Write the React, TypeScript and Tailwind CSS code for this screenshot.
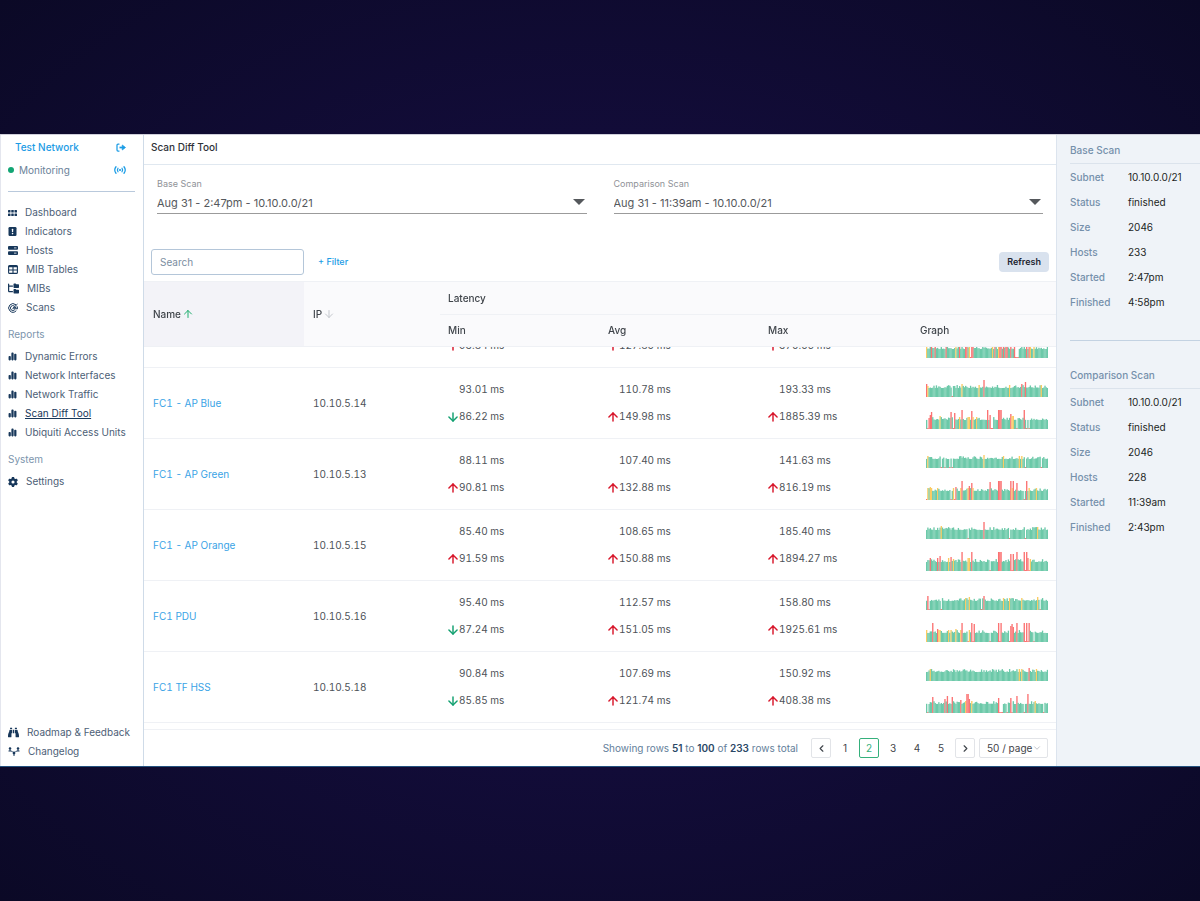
import React, { useLayoutEffect, useRef } from 'react';
import { ArrowDown, ArrowUp, ChevronDown, ChevronLeft, ChevronRight } from 'lucide-react';
import { FaBinoculars } from 'react-icons/fa';
import { FaChartSimple, FaFolderTree, FaGear } from 'react-icons/fa6';

const ROW_HEIGHT = 71;
const BAR_COUNT = 100;

const barColors: Record<string, string> = {
  g: '#6cc9a9',
  y: '#fbcb62',
  r: '#fb7272',
  x: '#fb7272',
};

type Latency = { base?: string; current: string; up: boolean };
type Host = { name?: string; ip?: string; latency: Latency[]; graphs: [string, string] };

const ms = (base: string | undefined, current: string, up = true): Latency => ({ base, current, up });

// Graph strings list the outliers only: bar index, kind (y slow, r very slow, x lost), height
const hosts: Host[] = [
  {
    latency: [ms(undefined, '93.84'), ms(undefined, '127.85'), ms(undefined, '370.56')],
    graphs: [
      '12y12 40r15 77y12',
      '0y12 4r12 7r12 16r12 24y12 27r12 32r12 33r12 35y12 36x1 37r12 38r12 54y12 56r12 59y12 60r14 61r12 63r12 65r12 66r12 69r12 72r14 73x1 74x1 75x1 82r12 84r12 85y12 88y12',
    ],
  },
  {
    name: 'FC1 - AP Blue',
    ip: '10.10.5.14',
    latency: [ms('93.01', '86.22', false), ms('110.78', '149.98'), ms('193.33', '1885.39')],
    graphs: [
      '0r13 1y11 21x1 29y13 43y12 47r17 68y12 78r13 81r15 94y12',
      '1x1 2r11 3r14 4r17 11y13 20r17 22x1 23r16 27y12 29r19 34y12 35y12 37r18 38y12 41y12 50r19 52r14 53x1 54x1 59r19 60r19 61r19 69r15 70y13 71y13 74x1 80r19 82x1 84x1',
    ],
  },
  {
    name: 'FC1 - AP Green',
    ip: '10.10.5.13',
    latency: [ms('88.11', '90.81'), ms('107.40', '132.88'), ms('141.63', '816.19')],
    graphs: [
      '1y12 12x1 15x1 19x1 21x1 47y13 63y12 76y12 78y12 81x1 94x1',
      '0x1 1y12 3y13 4y12 9y12 20x1 22y12 23x1 24r13 28y12 29r19 34y12 35r14 37r17 38y12 52r18 59r19 60r19 61r19 69r19 70y12 71r19 74r17 80x1 82r19 84y12 90y12',
    ],
  },
  {
    name: 'FC1 - AP Orange',
    ip: '10.10.5.15',
    latency: [ms('85.40', '91.59'), ms('108.65', '150.88'), ms('185.40', '1894.27')],
    graphs: [
      '12y13 34x1 47r17 68x1 81x1 91y12',
      '3r13 9r13 11r15 18y13 20r14 22y12 29r19 34y13 35y13 37r19 52x1 59r19 60r19 61r19 69r17 70x1 71r17 74r19 80r19 81x1 82r19 83r13 84x1 85y12',
    ],
  },
  {
    name: 'FC1 PDU',
    ip: '10.10.5.16',
    latency: [ms('95.40', '87.24', false), ms('112.57', '151.05'), ms('158.80', '1925.61')],
    graphs: [
      '1r14 2x1 12x1 32y12 35y13 45x1 47r14 63y12 68y12 78y12 91y13 93x1',
      '0y12 5r19 9r13 10y12 11y12 18y12 20y12 24y13 28y12 29r19 34x1 35y12 37r19 38x1 39r18 52x1 59r19 60x1 61r19 68x1 69r16 70r18 71r15 74r19 80r19 81x1 82r19 83x1 84r19 88x1',
    ],
  },
  {
    name: 'FC1 TF HSS',
    ip: '10.10.5.18',
    latency: [ms('90.84', '85.85', false), ms('107.69', '121.74'), ms('150.92', '408.38')],
    graphs: [
      '3y12 76y12 78y12 84r13 90y12',
      '1x1 5r16 15r14 17r17 21r16 28r13 32y12 33r19 34r19 35r14 37y12 59r15 60x1 61x1 62x1 66x1 69r15 70x1 74r17 80x1 83r19 89y12 96x1',
    ],
  },
];

const DashboardIcon = () => (
  <svg viewBox="0 0 18 12" className="h-[6px] w-[9px]" fill="currentColor">
    <rect x="0" y="0" width="5" height="5" rx="1" />
    <rect x="6.5" y="0" width="5" height="5" rx="1" />
    <rect x="13" y="0" width="5" height="5" rx="1" />
    <rect x="0" y="7" width="5" height="5" rx="1" />
    <rect x="6.5" y="7" width="5" height="5" rx="1" />
    <rect x="13" y="7" width="5" height="5" rx="1" />
  </svg>
);

const IndicatorsIcon = () => (
  <svg viewBox="0 0 18 18" className="h-[9px] w-[9px]">
    <rect x="1" y="0" width="16" height="18" rx="2.5" fill="currentColor" />
    <rect x="7.8" y="3.5" width="2.6" height="6.5" rx="1" fill="#fff" />
    <circle cx="9.1" cy="13.2" r="1.6" fill="#fff" />
  </svg>
);

const HostsIcon = () => (
  <svg viewBox="0 0 20 18" className="h-[9px] w-[10px]">
    <rect x="0" y="0" width="20" height="7.5" rx="2" fill="currentColor" />
    <rect x="0" y="10.5" width="20" height="7.5" rx="2" fill="currentColor" />
    <path d="M12 3.8H17M12 14.3H17" stroke="#fff" strokeWidth="1.5" />
  </svg>
);

const TableIcon = () => (
  <svg viewBox="0 0 20 18" className="h-[9px] w-[10px]" fill="none" stroke="currentColor" strokeWidth="2.2">
    <rect x="1.2" y="1.2" width="17.6" height="15.6" rx="2" />
    <path d="M1 3H19" strokeWidth="3" />
    <path d="M1 10H19M10 4V17" />
  </svg>
);

const ScansIcon = () => (
  <svg viewBox="0 0 20 20" className="h-[10px] w-[10px]" fill="none" stroke="currentColor" strokeWidth="2" strokeLinecap="round">
    <path d="M15.5 3.2A8.6 8.6 0 1 0 16 16" />
    <path d="M12.7 6A5 5 0 1 0 13 14" />
    <path d="M10 10.5 18.5 2.5" />
    <path d="M10 10.5 16 8.5M18.5 7.5 19 11.5 13 11.5" />
  </svg>
);

const ChangelogIcon = () => (
  <svg viewBox="0 0 24 18" className="h-[9px] w-[12px]" fill="none" stroke="currentColor" strokeWidth="2">
    <circle cx="4" cy="3" r="2.5" fill="currentColor" stroke="none" />
    <circle cx="20" cy="3" r="2.5" fill="currentColor" stroke="none" />
    <circle cx="12" cy="12" r="2.8" fill="currentColor" stroke="none" />
    <path d="M1 8H7L9 10M23 8H17L15 10M4 5V8M20 5V8M12 13V18" />
  </svg>
);

const SignOutIcon = () => (
  <svg viewBox="0 0 20 18" className="h-[9px] w-[10px]" fill="none" stroke="currentColor" strokeWidth="2.5">
    <path d="M6 2H4Q2 2 2 4V14Q2 16 4 16H6" strokeLinecap="round" />
    <path d="M7 9H14" strokeWidth="3.5" />
    <path d="M12.5 4 19 9 12.5 14Z" fill="currentColor" stroke="currentColor" strokeWidth="1.5" strokeLinejoin="round" />
  </svg>
);

const BroadcastIcon = () => (
  <svg viewBox="0 0 24 16" className="h-[8px] w-[12px]" fill="none" stroke="currentColor" strokeWidth="2.5" strokeLinecap="round">
    <circle cx="12" cy="8" r="2.2" fill="currentColor" stroke="none" />
    <path d="M4 1.5Q-1 8 4 14.5M20 1.5Q25 8 20 14.5" />
    <path d="M8 4.5Q5.5 8 8 11.5M16 4.5Q18.5 8 16 11.5" />
  </svg>
);

const mainLinks = [
  { label: 'Dashboard', icon: <DashboardIcon /> },
  { label: 'Indicators', icon: <IndicatorsIcon /> },
  { label: 'Hosts', icon: <HostsIcon /> },
  { label: 'MIB Tables', icon: <TableIcon /> },
  { label: 'MIBs', icon: <FaFolderTree className="size-[11px]" /> },
  { label: 'Scans', icon: <ScansIcon /> },
];

const reportLinks = ['Dynamic Errors', 'Network Interfaces', 'Network Traffic', 'Scan Diff Tool', 'Ubiquiti Access Units'];

const NavItem = ({ label, icon, active }: { label: string; icon: React.ReactNode; active?: boolean }) => (
  <li>
    <a href="#" className="flex h-[19px] items-center gap-2 text-[#17375a]">
      {icon}
      <span className={active ? 'text-[#17375a] underline underline-offset-1' : 'text-[#4c6076]'}>{label}</span>
    </a>
  </li>
);

const Sidebar = () => (
  <nav className="flex w-36 shrink-0 flex-col border-x border-l-[#e4e6ee] border-r-[#cfdbe8] bg-white pr-2 pb-[5px] pl-[7px] text-[10px] whitespace-nowrap">
    <div className="flex h-[25px] items-center justify-between pr-[9px] pl-[7px] text-[#1b9ce5]">
      <a href="#" className="font-medium">Test Network</a>
      <button aria-label="Sign out"><SignOutIcon /></button>
    </div>
    <div className="flex h-5 items-center justify-between pr-[9px]">
      <span className="flex items-center gap-[5px] text-[#6b8299]">
        <span className="size-[6px] rounded-full bg-[#12a574]" />
        Monitoring
      </span>
      <button aria-label="Live updates" className="text-[#1b9ce5]"><BroadcastIcon /></button>
    </div>
    <div className="mt-[11px] border-t border-[#b9c9dc]" />

    <ul className="mt-[11px]">
      {mainLinks.map((link) => <NavItem key={link.label} {...link} />)}
    </ul>
    <h2 className="mt-[7px] h-5 leading-5 text-[#7c95ad]">Reports</h2>
    <ul className="mt-[3px]">
      {reportLinks.map((label) => (
        <NavItem key={label} label={label} icon={<FaChartSimple className="size-[9px]" />} active={label === 'Scan Diff Tool'} />
      ))}
    </ul>
    <h2 className="mt-[7px] h-5 leading-5 text-[#7c95ad]">System</h2>
    <ul className="mt-[3px]">
      <NavItem label="Settings" icon={<FaGear className="size-[10px]" />} />
    </ul>

    <ul className="mt-auto">
      <NavItem label="Roadmap & Feedback" icon={<FaBinoculars className="size-[11px]" />} />
      <NavItem label="Changelog" icon={<ChangelogIcon />} />
    </ul>
  </nav>
);

const ScanSelect = ({ id, label, value }: { id: string; label: string; value: string }) => (
  <div className="flex flex-1 flex-col">
    <label htmlFor={id} className="text-[9px] leading-3 text-[#8f9297]">{label}</label>
    <div className="relative mt-[3px] border-b border-[#9b9b9b]">
      <select id={id} className="block h-5 w-full appearance-none bg-transparent text-[11px] text-[#55585c]">
        <option>{value}</option>
      </select>
      <svg viewBox="0 0 12 6" className="pointer-events-none absolute top-[6px] right-[2px] h-[6px] w-[12px] fill-[#55585c]">
        <path d="M0 0H12L6 6Z" />
      </svg>
    </div>
  </div>
);

const LatencyGraph = ({ data, seed }: { data: string; seed: number }) => {
  const outliers = new Map<number, { kind: string; height: number }>();
  data.split(' ').forEach((item) => {
    const [, index, kind, height] = item.match(/(\d+)([yrx])(\d+)/)!;
    outliers.set(Number(index), { kind, height: Number(height) });
  });

  return (
    <svg viewBox="0 0 100 20" preserveAspectRatio="none" className="block h-5 w-[122px]">
      {Array.from({ length: BAR_COUNT }, (_, i) => {
        const noise = Math.abs(Math.sin((i + 1) * 12.9898 + seed * 78.233) * 43758.5453) % 1;
        const { kind, height } = outliers.get(i) ?? { kind: 'g', height: 9 + noise * noise * 3 };
        return <rect key={i} x={i} y={20 - height} width="1.1" height={height} fill={barColors[kind]} />;
      })}
    </svg>
  );
};

const LatencyCell = ({ base, current, up }: Latency) => (
  <td className="border-b border-[#eff1f5] px-2">
    <div className="flex h-[27px] items-center pl-[11px]">{base && `${base} ms`}</div>
    <div className="flex h-[27px] items-center">
      <span className="w-[11px]">
        {up
          ? <ArrowUp size={14} strokeWidth={2.5} className="-ml-[2px] text-[#d8182c]" />
          : <ArrowDown size={14} strokeWidth={2.5} className="-ml-[2px] text-[#12a070]" />}
      </span>
      {current} ms
    </div>
  </td>
);

const HostTable = () => {
  const scroller = useRef<HTMLDivElement>(null);

  useLayoutEffect(() => {
    if (scroller.current) scroller.current.scrollTop = 50;
  }, []);

  const th = 'border-b border-[#eff1f5] bg-[#fafafc] px-2 text-left font-medium';

  return (
    <div ref={scroller} className="min-h-0 flex-1 overflow-y-auto border-y border-[#eff1f5] pb-2 [scrollbar-width:none]">
      <table className="w-full table-fixed border-separate border-spacing-0 text-[10px] text-[#4d5258] tabular-nums">
        <colgroup>
          <col className="w-[160px]" />
          <col className="w-[136px]" />
          <col className="w-[160px]" />
          <col className="w-[160px]" />
          <col className="w-[152px]" />
          <col />
        </colgroup>
        <thead className="sticky top-0 z-10 text-[#3f444a]">
          <tr className="h-[33px]">
            <th rowSpan={2} className="border-b border-[#eff1f5] bg-[#f3f3f8] pl-[9px] text-left font-medium">
              <button className="flex items-center gap-px">Name <ArrowUp size={12} color="#1fae6e" /></button>
            </th>
            <th rowSpan={2} className="border-b border-[#eff1f5] bg-[#fafafc] pl-[9px] text-left font-medium">
              <button className="flex items-center gap-px">IP <ArrowDown size={12} color="#c5c8ce" /></button>
            </th>
            <th colSpan={4} className={th}>Latency</th>
          </tr>
          <tr className="h-[32px]">
            <th className={th}>Min</th>
            <th className={th}>Avg</th>
            <th className={th}>Max</th>
            <th className={th}>Graph</th>
          </tr>
        </thead>
        <tbody>
          {hosts.map((host, i) => (
            <tr key={i} style={{ height: ROW_HEIGHT }}>
              <td className="border-b border-[#eff1f5] pl-[9px]"><a href="#" className="text-[#3aa3e6]">{host.name}</a></td>
              <td className="border-b border-[#eff1f5] pl-[9px]">{host.ip}</td>
              {host.latency.map((item, n) => <LatencyCell key={n} {...item} />)}
              <td className="border-b border-[#eff1f5] pl-[14px]">
                <div className="flex flex-col gap-3">
                  <LatencyGraph data={host.graphs[0]} seed={i * 2 + 1} />
                  <LatencyGraph data={host.graphs[1]} seed={i * 2 + 2} />
                </div>
              </td>
            </tr>
          ))}
        </tbody>
      </table>
    </div>
  );
};

const Pagination = () => (
  <footer className="flex h-[36px] shrink-0 items-center justify-end pr-2 text-[10px] text-[#3f444a]">
    <p className="mr-[13px] text-[#64809a]">
      Showing rows <b className="font-semibold text-[#2b4866]">51</b> to <b className="font-semibold text-[#2b4866]">100</b> of{' '}
      <b className="font-semibold text-[#2b4866]">233</b> rows total
    </p>
    <div className="flex gap-1">
      <button aria-label="Previous page" className="grid size-5 place-items-center rounded-xs border border-[#e2e4e8]"><ChevronLeft size={11} strokeWidth={2.5} /></button>
      {[1, 2, 3, 4, 5].map((page) => (
        <button key={page} className={page === 2 ? 'size-5 rounded-xs border border-[#35b07c] text-[#35b07c]' : 'size-5'}>{page}</button>
      ))}
      <button aria-label="Next page" className="grid size-5 place-items-center rounded-xs border border-[#e2e4e8]"><ChevronRight size={11} strokeWidth={2.5} /></button>
      <div className="relative">
        <select aria-label="Rows per page" className="block h-5 w-[69px] appearance-none rounded-xs border border-[#e2e4e8] bg-white pl-[7px]">
          <option>50 / page</option>
        </select>
        <ChevronDown size={10} className="pointer-events-none absolute top-[5px] right-[6px] text-[#b5b8bf]" />
      </div>
    </div>
  </footer>
);

const ScanDetails = ({ title, rows }: { title: string; rows: string[][] }) => (
  <section>
    <h2 className="h-[29px] border-b border-[#dbe3ec] leading-[30px] font-medium text-[#7590ab]">{title}</h2>
    <dl className="mt-px">
      {rows.map(([label, value]) => (
        <div key={label} className="flex h-[25px] items-center">
          <dt className="w-[58px] font-medium text-[#7590ab]">{label}</dt>
          <dd className="text-[#1c1f24]">{value}</dd>
        </div>
      ))}
    </dl>
  </section>
);

const App = () => (
  <div className="flex h-screen bg-[radial-gradient(ellipse_at_center,#150d40_0%,#120c38_50%,#0b0926_100%)] py-[134px] font-['Inter',sans-serif]">
    <div className="flex min-w-0 flex-1 border-t border-b border-t-[#cfcfda] border-b-[#24527f] bg-white">
      <Sidebar />

      <main className="flex min-w-0 flex-1 flex-col">
        <h1 className="h-[30px] shrink-0 border-b border-[#e0e8f0] pl-[7px] text-[10px] leading-[25px] font-medium text-[#2e3238]">Scan Diff Tool</h1>
        <div className="flex gap-[27px] px-[13px] pt-[13px] pb-[35px]">
          <ScanSelect id="base-scan" label="Base Scan" value="Aug 31 - 2:47pm - 10.10.0.0/21" />
          <ScanSelect id="comparison-scan" label="Comparison Scan" value="Aug 31 - 11:39am - 10.10.0.0/21" />
        </div>
        <div className="flex items-center px-[7px] pb-[6px]">
          <input
            type="search"
            aria-label="Search"
            placeholder="Search"
            className="h-[26px] w-[153px] rounded-[3px] border border-[#b4c6d9] px-2 text-[10px] placeholder:text-[#7b8ea1]"
          />
          <button className="ml-[14px] text-[9px] font-medium text-[#1b9ce5]">+ Filter</button>
          <button className="ml-auto h-5 rounded-[4px] bg-[#d9e2ee] px-2 text-[9px] font-semibold text-[#1c2430]">Refresh</button>
        </div>
        <HostTable />
        <Pagination />
      </main>

      <aside className="w-36 shrink-0 border-l border-[#dce4ee] bg-[#eff3f8] pl-[13px] text-[10px]">
        <ScanDetails
          title="Base Scan"
          rows={[['Subnet', '10.10.0.0/21'], ['Status', 'finished'], ['Size', '2046'], ['Hosts', '233'], ['Started', '2:47pm'], ['Finished', '4:58pm']]}
        />
        <div className="mt-[25px] mb-[19px] border-t border-[#c3d2e2]" />
        <ScanDetails
          title="Comparison Scan"
          rows={[['Subnet', '10.10.0.0/21'], ['Status', 'finished'], ['Size', '2046'], ['Hosts', '228'], ['Started', '11:39am'], ['Finished', '2:43pm']]}
        />
      </aside>
    </div>
  </div>
);

export default App;
